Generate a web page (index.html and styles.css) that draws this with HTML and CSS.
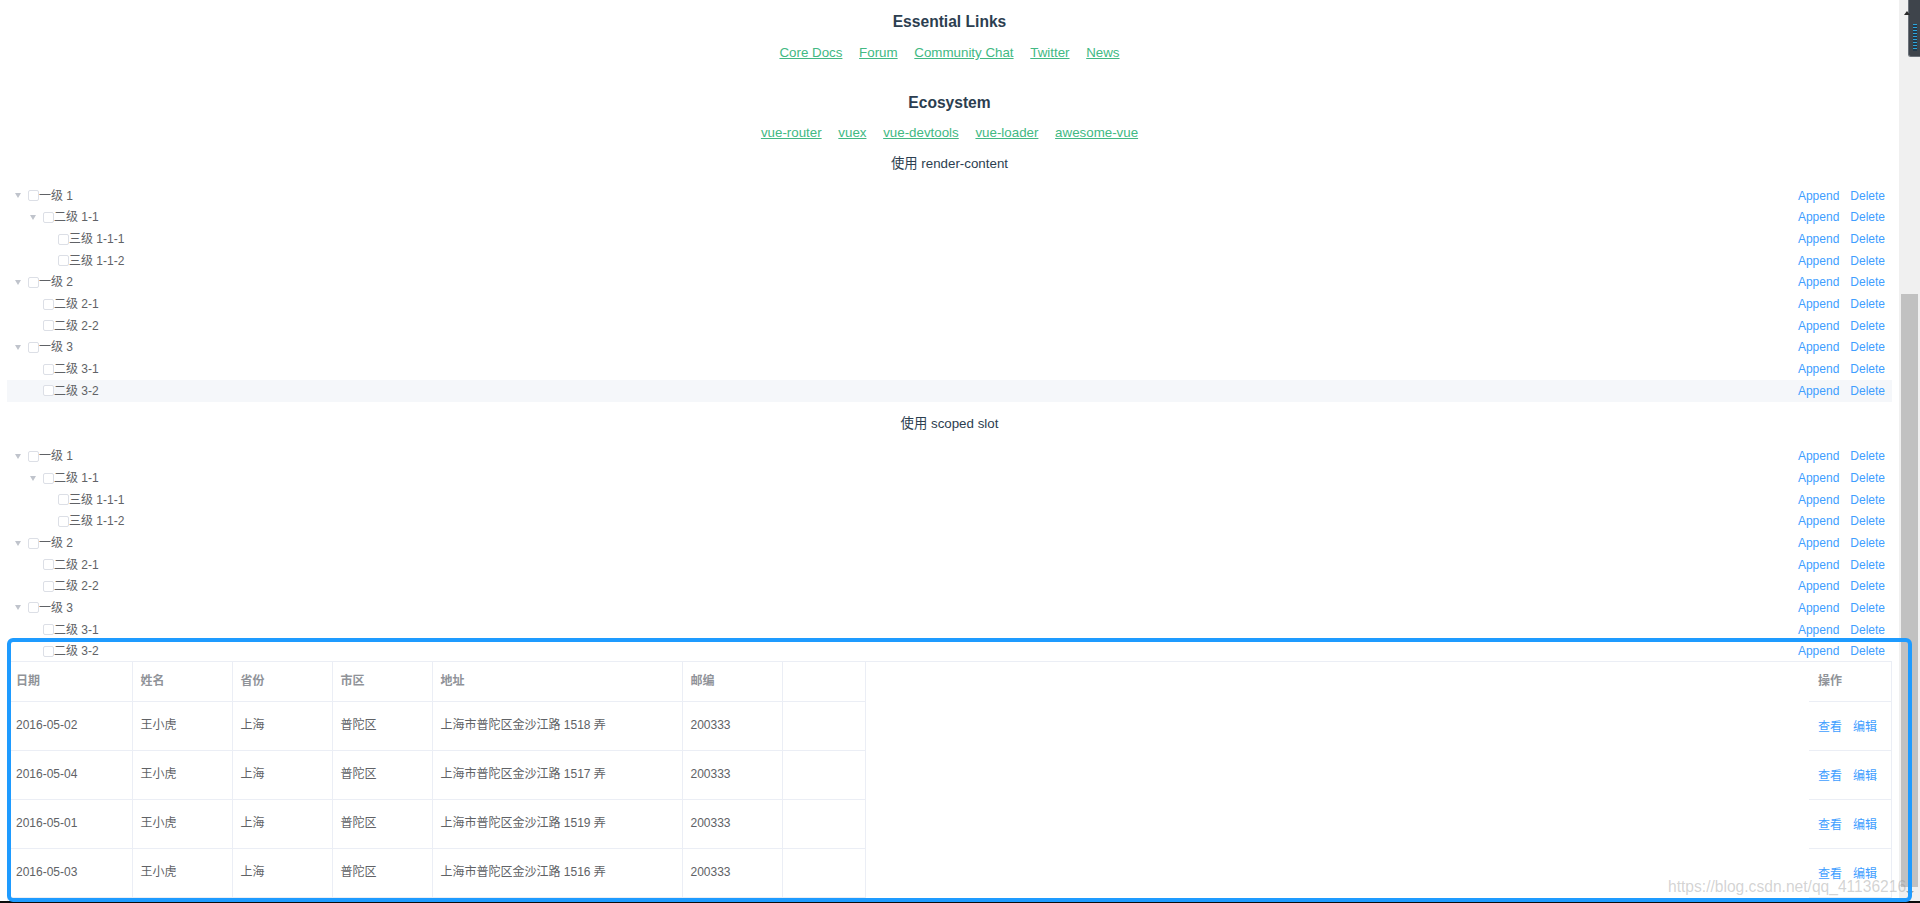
FILE: index.html
```html
<!DOCTYPE html>
<html lang="zh-CN">
<head>
  <meta charset="UTF-8" />
  <meta name="viewport" content="width=device-width, initial-scale=1.0" />
  <title>tree demo</title>
  <link rel="stylesheet" href="styles.css">
</head>
<body>
  <div class="screen">
    <div class="page">
      <div class="hello">
        <h3>Essential Links</h3>
        <ul class="links">
          <li><a href="#">Core Docs</a></li>
          <li><a href="#">Forum</a></li>
          <li><a href="#">Community Chat</a></li>
          <li><a href="#">Twitter</a></li>
          <li><a href="#">News</a></li>
        </ul>
        <h3 class="eco">Ecosystem</h3>
        <ul class="links">
          <li><a href="#">vue-router</a></li>
          <li><a href="#">vuex</a></li>
          <li><a href="#">vue-devtools</a></li>
          <li><a href="#">vue-loader</a></li>
          <li><a href="#">awesome-vue</a></li>
        </ul>
      </div>

      <!-- tree rendered with render-content -->
      <div class="demo-title">使用 render-content</div>
      <div class="tree">
        <div class="node"><span class="caret"></span><span class="check"></span><span class="label">一级 1</span><span class="ops"><a>Append</a><a>Delete</a></span></div>
        <div class="node lvl-2"><span class="caret"></span><span class="check"></span><span class="label">二级 1-1</span><span class="ops"><a>Append</a><a>Delete</a></span></div>
        <div class="node lvl-3"><span class="caret is-leaf"></span><span class="check"></span><span class="label">三级 1-1-1</span><span class="ops"><a>Append</a><a>Delete</a></span></div>
        <div class="node lvl-3"><span class="caret is-leaf"></span><span class="check"></span><span class="label">三级 1-1-2</span><span class="ops"><a>Append</a><a>Delete</a></span></div>
        <div class="node"><span class="caret"></span><span class="check"></span><span class="label">一级 2</span><span class="ops"><a>Append</a><a>Delete</a></span></div>
        <div class="node lvl-2"><span class="caret is-leaf"></span><span class="check"></span><span class="label">二级 2-1</span><span class="ops"><a>Append</a><a>Delete</a></span></div>
        <div class="node lvl-2"><span class="caret is-leaf"></span><span class="check"></span><span class="label">二级 2-2</span><span class="ops"><a>Append</a><a>Delete</a></span></div>
        <div class="node"><span class="caret"></span><span class="check"></span><span class="label">一级 3</span><span class="ops"><a>Append</a><a>Delete</a></span></div>
        <div class="node lvl-2"><span class="caret is-leaf"></span><span class="check"></span><span class="label">二级 3-1</span><span class="ops"><a>Append</a><a>Delete</a></span></div>
        <div class="node lvl-2 is-current"><span class="caret is-leaf"></span><span class="check"></span><span class="label">二级 3-2</span><span class="ops"><a>Append</a><a>Delete</a></span></div>
      </div>

      <!-- tree rendered with scoped slot -->
      <div class="demo-title">使用 scoped slot</div>
      <div class="tree">
        <div class="node"><span class="caret"></span><span class="check"></span><span class="label">一级 1</span><span class="ops"><a>Append</a><a>Delete</a></span></div>
        <div class="node lvl-2"><span class="caret"></span><span class="check"></span><span class="label">二级 1-1</span><span class="ops"><a>Append</a><a>Delete</a></span></div>
        <div class="node lvl-3"><span class="caret is-leaf"></span><span class="check"></span><span class="label">三级 1-1-1</span><span class="ops"><a>Append</a><a>Delete</a></span></div>
        <div class="node lvl-3"><span class="caret is-leaf"></span><span class="check"></span><span class="label">三级 1-1-2</span><span class="ops"><a>Append</a><a>Delete</a></span></div>
        <div class="node"><span class="caret"></span><span class="check"></span><span class="label">一级 2</span><span class="ops"><a>Append</a><a>Delete</a></span></div>
        <div class="node lvl-2"><span class="caret is-leaf"></span><span class="check"></span><span class="label">二级 2-1</span><span class="ops"><a>Append</a><a>Delete</a></span></div>
        <div class="node lvl-2"><span class="caret is-leaf"></span><span class="check"></span><span class="label">二级 2-2</span><span class="ops"><a>Append</a><a>Delete</a></span></div>
        <div class="node"><span class="caret"></span><span class="check"></span><span class="label">一级 3</span><span class="ops"><a>Append</a><a>Delete</a></span></div>
        <div class="node lvl-2"><span class="caret is-leaf"></span><span class="check"></span><span class="label">二级 3-1</span><span class="ops"><a>Append</a><a>Delete</a></span></div>
        <div class="node lvl-2"><span class="caret is-leaf"></span><span class="check"></span><span class="label">二级 3-2</span><span class="ops"><a>Append</a><a>Delete</a></span></div>
      </div>

      <!-- table with a fixed right column -->
      <div class="table-wrap">
        <table class="grid main-grid">
          <colgroup>
            <col class="w-date"><col class="w-120"><col class="w-120"><col class="w-120"><col class="w-addr"><col class="w-120"><col class="w-fix">
          </colgroup>
          <thead>
            <tr><th>日期</th><th>姓名</th><th>省份</th><th>市区</th><th>地址</th><th>邮编</th><th></th></tr>
          </thead>
          <tbody>
            <tr><td>2016-05-02</td><td>王小虎</td><td>上海</td><td>普陀区</td><td>上海市普陀区金沙江路 1518 弄</td><td>200333</td><td></td></tr>
            <tr><td>2016-05-04</td><td>王小虎</td><td>上海</td><td>普陀区</td><td>上海市普陀区金沙江路 1517 弄</td><td>200333</td><td></td></tr>
            <tr><td>2016-05-01</td><td>王小虎</td><td>上海</td><td>普陀区</td><td>上海市普陀区金沙江路 1519 弄</td><td>200333</td><td></td></tr>
            <tr><td>2016-05-03</td><td>王小虎</td><td>上海</td><td>普陀区</td><td>上海市普陀区金沙江路 1516 弄</td><td>200333</td><td></td></tr>
          </tbody>
        </table>
        <div class="table-gap"></div>
        <table class="grid fixed-right">
          <thead>
            <tr><th>操作</th></tr>
          </thead>
          <tbody>
            <tr><td><a>查看</a><a>编辑</a></td></tr>
            <tr><td><a>查看</a><a>编辑</a></td></tr>
            <tr><td><a>查看</a><a>编辑</a></td></tr>
            <tr><td><a>查看</a><a>编辑</a></td></tr>
          </tbody>
        </table>
      </div>
    </div>

    <div class="scrollbar">
      <div class="thumb"></div>
      <div class="arrow-down"></div>
    </div>
  </div>
  <div class="taskbar"></div>

  <!-- overlays on the screenshot -->
  <div class="widget"><span class="widget-mark"></span><span class="widget-meter"></span></div>
  <div class="mark-box"></div>
  <div class="watermark">https://blog.csdn.net/qq_41136216</div>
</body>
</html>
```

FILE: styles.css
```css
body {
  margin: 0;
  height: 903px;
  overflow: hidden;
  position: relative;
  background: #fff;
  font-family: "Liberation Sans", Arial, "Noto Sans CJK SC", sans-serif;
  color: #2c3e50;
}
.screen {
  display: flex;
  height: 901px;
}
.page {
  flex: 1;
  min-width: 0;
  padding: 0 7px;
  overflow: hidden;
}
.taskbar {
  height: 2px;
  background: #0c0c0c;
}

/* header links */
.hello {
  text-align: center;
  padding-top: 13px;
}
.hello h3 {
  margin: 0;
  font-size: 15.6px;
  line-height: 18px;
  font-weight: bold;
}
.hello h3.eco {
  margin-top: 34px;
}
.links {
  list-style: none;
  margin: 14px 0 0;
  padding: 0;
  display: flex;
  justify-content: center;
  gap: 16.7px;
  font-size: 13.33px;
  line-height: 15px;
}
.eco + .links {
  margin-top: 13px;
}
.links a {
  color: #42b983;
}
.demo-title {
  text-align: center;
  font-size: 13.33px;
  line-height: 16px;
  padding: 14px 0;
}
.hello + .demo-title {
  padding: 16px 0 13px;
}

/* tree */
.tree {
  font-size: 12px;
  color: #606266;
}
.node {
  display: flex;
  align-items: center;
  height: 21.67px;
  padding-right: 7px;
}
.node.lvl-2 {
  padding-left: 15px;
}
.node.lvl-3 {
  padding-left: 30px;
}
.node.is-current {
  background: #f5f7fa;
}
.caret {
  flex: none;
  width: 0;
  height: 0;
  margin: 0 7px 0 8px;
  border-left: 3.5px solid transparent;
  border-right: 3.5px solid transparent;
  border-top: 5px solid #c0c4cc;
}
.caret.is-leaf {
  border-top-color: transparent;
}
.check {
  flex: none;
  width: 11px;
  height: 11px;
  box-sizing: border-box;
  border: 1px solid #dcdfe6;
  border-radius: 2px;
  background: #fff;
}
.label {
  flex: 1;
  line-height: 14px;
}
.ops a {
  color: #409eff;
  margin-left: 11px;
  cursor: pointer;
}

/* table */
.table-wrap {
  display: flex;
  margin-top: -1px;
  border: 1px solid #ebeef5;
  border-bottom: none;
  background: #fff;
  height: 260px;
}
.grid {
  border-collapse: collapse;
  table-layout: fixed;
  font-size: 12px;
  line-height: 14px;
  align-self: flex-start;
  flex: none;
}
.grid th,
.grid td {
  text-align: left;
  padding: 0 0 0 8px;
  border-bottom: 1px solid #ebeef5;
  border-right: 1px solid #ebeef5;
  white-space: nowrap;
  overflow: hidden;
}
.grid th {
  height: 38px;
  padding-bottom: 1px;
  color: #909399;
  font-weight: bold;
}
.grid td {
  height: 46px;
  padding-bottom: 2px;
  color: #606266;
}
.main-grid {
  width: 857px;
}
.w-date { width: 124px; }
.w-120 { width: 100px; }
.w-addr { width: 250px; }
.w-fix { width: 83px; }
.table-gap {
  flex: 1;
}
.fixed-right {
  width: 82px;
}
.fixed-right th,
.fixed-right td {
  border-right: none;
  padding-left: 9px;
}
.fixed-right td {
  padding-top: 2px;
  padding-bottom: 0;
}
.fixed-right a {
  color: #409eff;
  margin-right: 11px;
}

/* scrollbar */
.scrollbar {
  width: 21px;
  flex: none;
  background: #f0f0f0;
  box-sizing: border-box;
  padding-top: 294px;
  display: flex;
  flex-direction: column;
  align-items: center;
}
.thumb {
  width: 17px;
  height: 593px;
  background: #c1c1c1;
}
.arrow-down {
  margin-top: 4px;
  width: 0;
  height: 0;
  border-left: 4px solid transparent;
  border-right: 4px solid transparent;
  border-top: 4px solid #a3a3a3;
}

/* overlays */
.widget {
  position: absolute;
  top: 0;
  right: 0;
  width: 11px;
  height: 56px;
  background: #3e444b;
  border: 1px solid #6b7179;
  border-top: none;
  border-right: none;
  border-radius: 0 0 0 3px;
}
.widget-mark {
  position: absolute;
  left: -5px;
  top: 11px;
  width: 0;
  height: 0;
  border-left: 3px solid transparent;
  border-right: 3px solid transparent;
  border-bottom: 4px solid #2a2a2a;
}
.widget-meter {
  position: absolute;
  left: 4px;
  top: 24px;
  width: 4px;
  height: 27px;
  background: repeating-linear-gradient(#2ea6dc 0 1.5px, #243847 1.5px 3px);
}
.mark-box {
  position: absolute;
  left: 7px;
  top: 638px;
  width: 1905px;
  height: 264px;
  box-sizing: border-box;
  border: 4px solid #1e9bff;
  border-radius: 6px;
}
.watermark {
  position: absolute;
  left: 1668px;
  top: 878px;
  font-size: 15.6px;
  line-height: 18px;
  color: rgba(150, 150, 150, 0.42);
  white-space: nowrap;
}
```
